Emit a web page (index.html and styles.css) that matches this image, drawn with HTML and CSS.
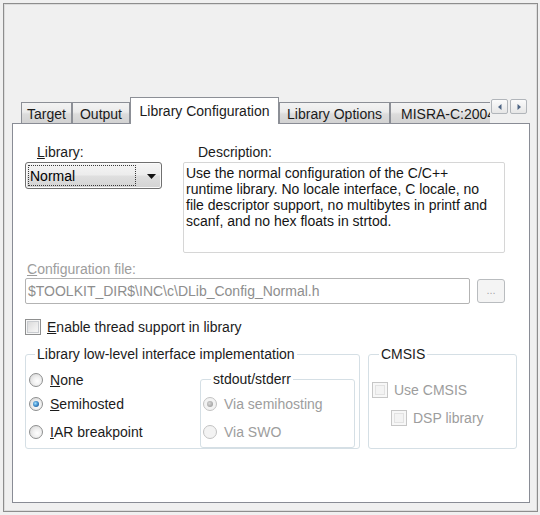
FILE: index.html
```html
<!DOCTYPE html>
<html>
<head>
<meta charset="utf-8">
<link rel="stylesheet" href="styles.css">
</head>
<body>
<div class="window">
  <div class="tabbar">
    <div class="tab w-target">Target</div>
    <div class="tab w-output">Output</div>
    <div class="tab active w-libconf">Library Configuration</div>
    <div class="tab w-libopt">Library Options</div>
    <div class="tab w-misra">MISRA-C:2004</div>
    <div class="scroller">
      <div class="sbtn"><svg width="4" height="6" viewBox="0 0 4 6"><path d="M3.5 0 L0 3 L3.5 6 Z" fill="#4f6584"/></svg></div>
      <div class="sbtn"><svg width="4" height="6" viewBox="0 0 4 6"><path d="M0.5 0 L4 3 L0.5 6 Z" fill="#4f6584"/></svg></div>
    </div>
  </div>
  <div class="panel">
    <div class="row-top">
      <div class="col-lib">
        <div class="lbl lbl-lib"><u>L</u>ibrary:</div>
        <div class="select">
          <div class="focus">Normal</div>
          <svg class="arrow" width="9" height="5" viewBox="0 0 9 5"><path d="M0 0 H9 L4.5 5 Z" fill="#111"/></svg>
        </div>
      </div>
      <div class="col-desc">
        <div class="lbl lbl-desc">Description:</div>
        <div class="descbox">Use the normal configuration of the C/C++<br>runtime library. No locale interface, C locale, no<br>file descriptor support, no multibytes in printf and<br>scanf, and no hex floats in strtod.</div>
      </div>
    </div>
    <div class="lbl lbl-conf disabled"><u>C</u>onfiguration file:</div>
    <div class="row-conf">
      <div class="input">$TOOLKIT_DIR$\INC\c\DLib_Config_Normal.h</div>
      <div class="btn-dots">...</div>
    </div>
    <div class="row-check">
      <span class="cb"></span>
      <span class="cb-label"><u>E</u>nable thread support in library</span>
    </div>
    <div class="row-groups">
      <fieldset class="group g-lib">
        <legend>Library low-level interface implementation</legend>
        <div class="g-lib-body">
          <div class="radios">
            <div class="opt"><span class="radio"></span><span><u>N</u>one</span></div>
            <div class="opt o-semi"><span class="radio checked"></span><span><u>S</u>emihosted</span></div>
            <div class="opt o-iar"><span class="radio"></span><span><u>I</u>AR breakpoint</span></div>
          </div>
          <fieldset class="group g-std">
            <legend>stdout/stderr</legend>
            <div class="opt disabled"><span class="radio checked dis"></span><span>Via semihosting</span></div>
            <div class="opt o-swo disabled"><span class="radio dis"></span><span>Via SWO</span></div>
          </fieldset>
        </div>
      </fieldset>
      <fieldset class="group g-cmsis">
        <legend>CMSIS</legend>
        <div class="opt c-use disabled"><span class="cb dis"></span><span class="cb-label">Use CMSIS</span></div>
        <div class="opt c-dsp disabled"><span class="cb dis"></span><span class="cb-label">DSP library</span></div>
      </fieldset>
    </div>
  </div>
</div>
</body>
</html>
```

FILE: styles.css
```css
html, body {
  margin: 0;
  background: #f0f0f0;
}
body {
  font-family: "Liberation Sans", Arial, sans-serif;
  font-size: 14px;
  line-height: 16px;
  color: #1b1b1b;
}
u { text-decoration: underline; text-underline-offset: 1px; }

.window {
  box-sizing: border-box;
  margin: 3px 0 0 3px;
  width: 535px;
  height: 509px;
  border: 1px solid #8d8d8d;
  box-shadow: inset 1px 1px 0 #dcdcdc, inset -1px -1px 0 #dcdcdc;
  background: #f0f0f0;
  padding: 93px 7px 8px 8px;
  display: flex;
  flex-direction: column;
}

/* tabs */
.tabbar {
  display: flex;
  align-items: flex-end;
  height: 26px;
  padding-left: 9px;
  position: relative;
  z-index: 2;
}
.tab {
  box-sizing: border-box;
  height: 21px;
  border: 1px solid #8c8f96;
  border-bottom: none;
  background: linear-gradient(#f3f3f3 0%, #ebebeb 45%, #dcdcdc 55%, #d2d2d2 100%);
  text-align: center;
  padding-top: 3px;
  white-space: nowrap;
  overflow: hidden;
}
.tab.active {
  height: 27px;
  margin-bottom: -1px;
  background: #fff;
  padding-top: 5px;
}
.w-target { width: 51px; }
.w-output { width: 58px; }
.w-libconf { width: 149px; }
.w-libopt { width: 111px; }
.w-misra { width: 100px; text-align: left; padding-left: 10px; border-right: none; }

.scroller {
  align-self: flex-start;
  display: flex;
  gap: 2px;
  margin-top: 2px;
  margin-left: 1px;
}
.sbtn {
  box-sizing: border-box;
  width: 17px;
  height: 15px;
  border: 1px solid #b1b5ba;
  border-radius: 2px;
  background: linear-gradient(#fbfbfb, #e6e6e6);
  display: flex;
  align-items: center;
  justify-content: center;
}

/* panel */
.panel {
  flex: 1;
  box-sizing: border-box;
  border: 1px solid #898c95;
  background: #fff;
  padding: 20px 0 0 12px;
  position: relative;
  z-index: 1;
}
.row-top {
  display: flex;
  gap: 21px;
}
.col-lib { width: 137px; }
.col-desc { width: 322px; }
.lbl { height: 16px; margin-bottom: 2px; }
.lbl-lib { margin-left: 12px; }
.lbl-desc { margin-left: 15px; }

.select {
  box-sizing: border-box;
  height: 27px;
  border: 1px solid #707070;
  border-radius: 3px;
  background: linear-gradient(#f5f5f5 0%, #ececec 48%, #dfdfdf 52%, #d3d3d3 100%);
  box-shadow: inset 0 0 0 1px #fafafa;
  padding: 2px;
  display: flex;
  align-items: center;
}
.focus {
  box-sizing: border-box;
  width: 108px;
  height: 21px;
  border: 1px dotted #3a3a3a;
  padding: 2px 0 0 1px;
  color: #000;
}
.arrow { margin-left: 11px; margin-top: 1px; }

.descbox {
  box-sizing: border-box;
  height: 91px;
  border: 1px solid #d6d6d6;
  border-radius: 2px;
  padding: 2px 2px 0 2px;
  white-space: nowrap;
  color: #141414;
}

.disabled { color: #9d9d9d; }
.lbl-conf { margin-top: 8px; margin-left: 2px; margin-bottom: 1px; }

.row-conf {
  display: flex;
  align-items: flex-start;
}
.input {
  box-sizing: border-box;
  width: 445px;
  height: 26px;
  border: 1px solid #b3b3b3;
  border-radius: 2px;
  padding: 4px 0 0 2px;
  color: #8e8e8e;
  background: #fff;
}
.btn-dots {
  box-sizing: border-box;
  width: 28px;
  height: 24px;
  margin: 1px 0 0 7px;
  border: 1px solid #b9bcbf;
  border-radius: 3px;
  background: #f4f4f4;
  color: #a8a8a8;
  font-size: 11px;
  text-align: center;
  line-height: 20px;
}

.row-check {
  display: flex;
  align-items: center;
  margin-top: 14px;
  height: 17px;
}
.cb {
  box-sizing: border-box;
  width: 16px;
  height: 16px;
  border: 1px solid #8e8f8f;
  background: linear-gradient(135deg, #d4d4d4 0%, #eeeeee 60%, #fafafa 100%);
  box-shadow: inset 0 0 0 1px #f6f6f6, inset 0 0 0 2px #c9ccd0;
  flex: none;
}
.cb.dis {
  border-color: #c6c6c6;
  background: #f3f3f3;
  box-shadow: inset 0 0 0 2px #f7f7f7, inset 0 0 0 3px #e2e2e2;
}
.cb-label { margin-left: 6px; }

/* groups */
.row-groups {
  display: flex;
  gap: 8px;
  margin-top: 11px;
}
fieldset.group {
  margin: 0;
  padding: 0;
  border: 1px solid #d5dfe5;
  border-radius: 3px;
  min-inline-size: 0;
}
fieldset.group legend {
  margin-left: 9px;
  padding: 0 2px;
  line-height: 16px;
  color: #1b1b1b;
}
.g-lib {
  box-sizing: border-box;
  width: 335px;
  padding-bottom: 13px;
}
.g-lib-body {
  display: flex;
  align-items: flex-start;
}
.radios {
  padding: 10px 0 0 3px;
}
.opt {
  display: flex;
  align-items: center;
  height: 16px;
}
.o-semi { margin-top: 8px; }
.o-iar { margin-top: 12px; }

.radio {
  box-sizing: border-box;
  width: 14px;
  height: 14px;
  border-radius: 50%;
  border: 1px solid #8e8f8f;
  background: radial-gradient(circle at 60% 60%, #ffffff 0%, #f0f0f0 40%, #d0d0d0 100%);
  margin-right: 7px;
  position: relative;
  flex: none;
}
.radio.checked::after {
  content: "";
  position: absolute;
  left: 3px;
  top: 3px;
  width: 6px;
  height: 6px;
  border-radius: 50%;
  background: radial-gradient(circle at 40% 40%, #9fe0ff 0%, #3d89c8 50%, #13427a 100%);
}
.radio.dis {
  border-color: #c2c2c2;
  background: #f3f3f3;
}
.radio.dis.checked::after {
  background: radial-gradient(circle at 40% 40%, #d8d8d8 0%, #acacac 60%, #8f8f8f 100%);
}

.g-std {
  box-sizing: border-box;
  width: 155px;
  margin: 9px 4px 0 auto !important;
  padding: 9px 0 7px 2px !important;
}
fieldset.g-std legend { margin-left: 8px; }
.o-swo { margin-top: 12px; }

.g-cmsis {
  box-sizing: border-box;
  width: 149px;
  padding: 20px 0 0 3px !important;
}
fieldset.g-cmsis legend { margin-left: 7px; }
.c-dsp { margin-top: 12px; margin-left: 19px; }
.c-use .cb-label, .c-dsp .cb-label { margin-left: 6px; }
```
